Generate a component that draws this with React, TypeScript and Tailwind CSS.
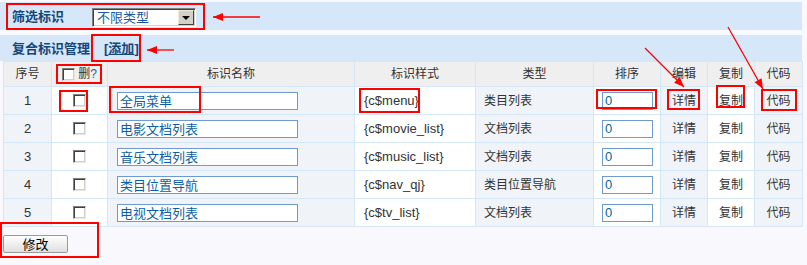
import React from "react";

const rows = [
  { id: 1, name: "全局菜单", tag: "{c$menu}", type: "类目列表" },
  { id: 2, name: "电影文档列表", tag: "{c$movie_list}", type: "文档列表" },
  { id: 3, name: "音乐文档列表", tag: "{c$music_list}", type: "文档列表" },
  { id: 4, name: "类目位置导航", tag: "{c$nav_qj}", type: "类目位置导航" },
  { id: 5, name: "电视文档列表", tag: "{c$tv_list}", type: "文档列表" },
];

function Check() {
  return (
    <div className="w-[13px] h-[13px] bg-white border border-t-[#808080] border-l-[#808080] border-r-[#e8e6e0] border-b-[#e8e6e0] shadow-[inset_1px_1px_0_#404040,inset_-1px_-1px_0_#d4d0c8]" />
  );
}

function arrowHead(x1: number, y1: number, x2: number, y2: number, len = 10, half = 4) {
  const dx = x2 - x1;
  const dy = y2 - y1;
  const d = Math.sqrt(dx * dx + dy * dy);
  const ux = dx / d;
  const uy = dy / d;
  const bx = x2 - ux * len;
  const by = y2 - uy * len;
  const px = -uy * half;
  const py = ux * half;
  return `${x2},${y2} ${bx + px},${by + py} ${bx - px},${by - py}`;
}

function Arrow({ x1, y1, x2, y2, w = 1.3 }: { x1: number; y1: number; x2: number; y2: number; w?: number }) {
  return (
    <g>
      <line x1={x1} y1={y1} x2={x2} y2={y2} stroke="#ff0000" strokeWidth={w} />
      <polygon points={arrowHead(x1, y1, x2, y2)} fill="#ff0000" />
    </g>
  );
}

const rects: [number, number, number, number][] = [
  [7, 4, 204, 29],
  [92, 35, 140, 61],
  [57, 65, 101, 83],
  [60, 91, 87, 111],
  [110, 87, 200, 112],
  [360, 89, 419, 112],
  [597, 90, 656, 108],
  [668, 90, 699, 109],
  [717, 86, 744, 107],
  [762, 90, 796, 110],
  [1, 223, 98, 257],
];

export default function App() {
  const font = { fontFamily: '"Liberation Sans", Arial, "Noto Sans CJK SC", sans-serif' };
  const th = "border border-[#d3e7f8] bg-[#efefef] text-[#333] font-normal text-[12px] h-[25px] p-0 text-center";
  const odd = "border border-[#d3e7f8] bg-[#f0f4f8] h-[28px] p-0";
  const even = "border border-[#d3e7f8] bg-white h-[28px] p-0";
  return (
    <div className="relative w-[807px] h-[265px] bg-[#f8f8fd] pt-[2px] overflow-hidden" style={font}>
      <div className="w-[802px]">
        <div className="h-[28px] bg-[#d5e7f8] flex items-center pl-[12px]">
          <span className="font-bold text-[13px] text-[#15467a] leading-none">筛选标识</span>
          <div className="ml-[28px] mt-[3px] w-[104px] h-[19px] bg-white flex items-stretch border border-t-[#808080] border-l-[#808080] border-r-white border-b-white shadow-[inset_1px_1px_0_#404040,inset_-1px_-1px_0_#d4d0c8] p-[1px]">
            <span className="flex-1 text-[13px] leading-[15px] text-[#1a5aa0] pl-[3px]">不限类型</span>
            <div className="w-[16px] bg-[#d4d0c8] flex items-center justify-center border border-t-[#ece9d8] border-l-[#ece9d8] border-r-[#404040] border-b-[#404040]">
              <div className="w-0 h-0 border-l-[4px] border-r-[4px] border-t-[4px] border-l-transparent border-r-transparent border-t-black" />
            </div>
          </div>
        </div>
        <div className="h-[5px] bg-[#f7fafe]" />
        <div className="h-[26px] bg-[#d5e7f8] flex items-center pl-[12px]">
          <span className="font-bold text-[13px] text-[#15467a] leading-none">复合标识管理</span>
          <span className="ml-[14px] font-bold text-[13px] text-[#15467a] leading-none">
            [<span className="underline">添加</span>]
          </span>
        </div>
        <table className="ml-[3px] w-[799px] table-fixed border-collapse">
          <colgroup>
            <col className="w-[48px]" />
            <col className="w-[56px]" />
            <col className="w-[247px]" />
            <col className="w-[121px]" />
            <col className="w-[118px]" />
            <col className="w-[67px]" />
            <col className="w-[47px]" />
            <col className="w-[47px]" />
            <col className="w-[48px]" />
          </colgroup>
          <thead>
            <tr>
              <th className={th}>序号</th>
              <th className={th}>
                <div className="flex items-center justify-center gap-[3px]">
                  <Check />
                  <span>删<span className="text-[#2a5c9a]">?</span></span>
                </div>
              </th>
              <th className={th}>标识名称</th>
              <th className={th}>标识样式</th>
              <th className={th}>类型</th>
              <th className={th}>排序</th>
              <th className={th}>编辑</th>
              <th className={th}>复制</th>
              <th className={th}>代码</th>
            </tr>
          </thead>
          <tbody>
            {rows.map((r) => (
              <tr key={r.id}>
                <td className={`${odd} text-center text-[13px] text-[#333]`}>{r.id}</td>
                <td className={even}>
                  <div className="flex justify-center">
                    <Check />
                  </div>
                </td>
                <td className={`${odd} pl-[9px]`}>
                  <input
                    readOnly
                    defaultValue={r.name}
                    className="block w-[181px] h-[18px] border border-[#6d9bd1] bg-white text-[13px] text-[#0d5fa5] px-[2px] leading-[16px] outline-none"
                  />
                </td>
                <td className={`${even} pl-[9px] text-[13px] text-[#333]`}>{r.tag}</td>
                <td className={`${odd} pl-[8px] text-[12px] text-[#333]`}>{r.type}</td>
                <td className={`${even} pl-[8px]`}>
                  <input
                    readOnly
                    defaultValue="0"
                    className="block w-[51px] h-[18px] border border-[#6d9bd1] bg-white text-[13px] text-[#0d5fa5] px-[2px] leading-[16px] outline-none"
                  />
                </td>
                <td className={`${odd} text-center text-[12px] text-[#333]`}>详情</td>
                <td className={`${even} text-center text-[12px] text-[#333]`}>复制</td>
                <td className={`${odd} text-center text-[12px] text-[#333]`}>代码</td>
              </tr>
            ))}
          </tbody>
        </table>
        <button className="ml-[3px] mt-[8px] w-[65px] h-[18px] rounded-[2px] border border-[#9a9a9a] bg-gradient-to-b from-[#fefefe] to-[#e0e0e0] text-[13px] leading-none text-black">
          修改
        </button>
      </div>
      <svg className="absolute left-0 top-0 pointer-events-none" width={807} height={265}>
        {rects.map(([x1, y1, x2, y2], i) => (
          <rect key={i} x={x1} y={y1} width={x2 - x1} height={y2 - y1} fill="none" stroke="#ff0000" strokeWidth={2} />
        ))}
        <Arrow x1={260} y1={17} x2={213} y2={17} />
        <Arrow x1={174} y1={50} x2={147} y2={50} />
        <Arrow x1={645} y1={48} x2={684} y2={87} />
        <Arrow x1={728} y1={27} x2={763} y2={89} />
      </svg>
    </div>
  );
}
